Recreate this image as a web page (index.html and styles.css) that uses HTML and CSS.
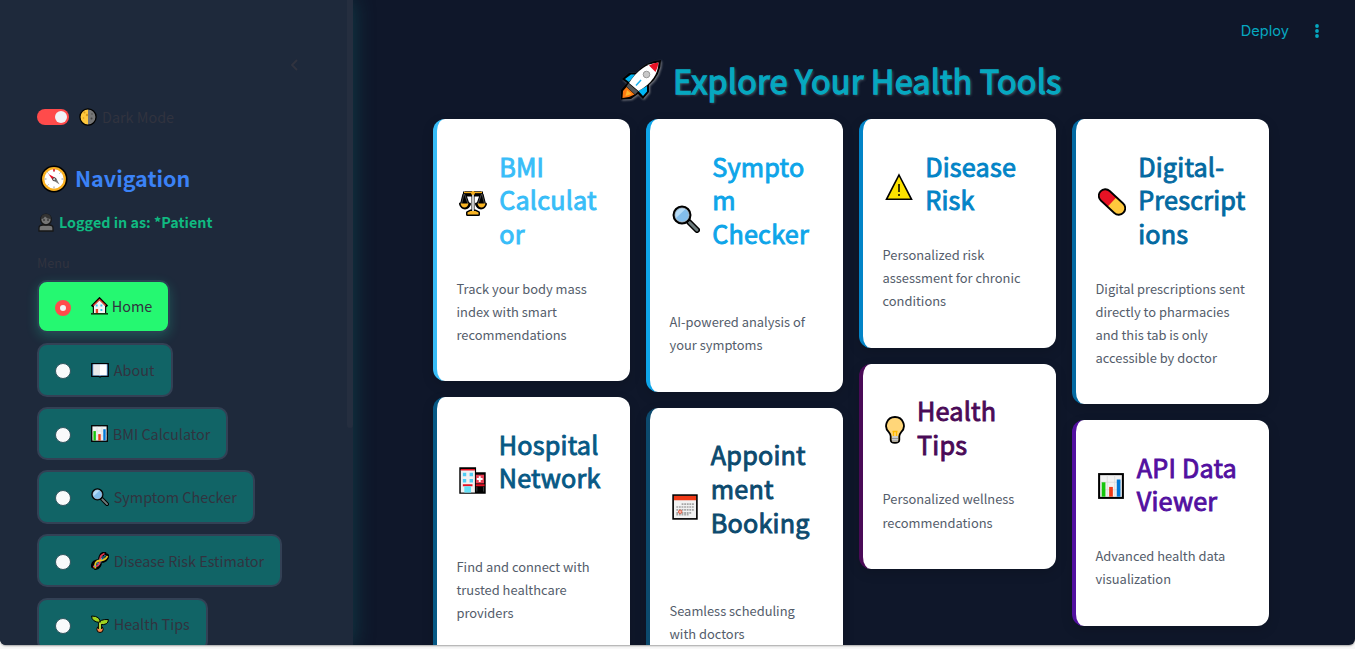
FILE: index.html
```html
<!DOCTYPE html>
<html lang="en">
<head>
<meta charset="utf-8">
<title>Health Tools</title>
<link rel="stylesheet" href="styles.css">
</head>
<body>
<svg class="defs" width="0" height="0">
  <symbol id="lens" viewBox="0 0 28 28">
    <path d="M17 17 25 25" stroke="#000" stroke-width="6" stroke-linecap="round"/>
    <path d="M17.5 17.5 25 25" stroke="#6d7b7c" stroke-width="3" stroke-linecap="round"/>
    <circle cx="10" cy="10" r="8.3" fill="#83beec" stroke="#000" stroke-width="2.4"/>
    <path d="M4 13A7 7 0 0 1 13.5 4Z" fill="#b5dcf8"/>
    <circle cx="10" cy="10" r="7" fill="none" stroke="#b9c4cc" stroke-width=".8"/>
  </symbol>
  <symbol id="chart" viewBox="0 0 28 28">
    <rect x="1.2" y="1.2" width="25.6" height="25.6" fill="#f2f2f2" stroke="#000" stroke-width="2.2"/>
    <path d="M10 2.5v23M18 2.5v23M2.5 10h23M2.5 18h23" stroke="#dcdcdc"/>
    <path d="M4 10h4v15.5H4z" fill="#16c60c"/><path d="M12 15h4v10.5h-4z" fill="#f03a17"/><path d="M20.200 7h4v18.500h-4z" fill="#0078d7"/>
  </symbol>
</svg>
<div class="app">
  <aside class="sidebar">
    <div class="collapse"><svg width="10" height="14" viewBox="0 0 10 14"><path d="M8 2 3 7l5 5" fill="none" stroke="#31333f" stroke-width="1.800"/></svg></div>
    <div class="toggle-row">
      <span class="toggle"></span>
      <svg class="moon" width="18" height="18" viewBox="0 0 18 18"><circle cx="9" cy="9" r="8" fill="#767676"/><path d="M9 1a8 8 0 0 0 0 16z" fill="#ffc83d"/><circle cx="9" cy="9" r="8.100" fill="none" stroke="#000" stroke-width="1.300"/><circle cx="5.500" cy="4.500" r="1" fill="#d99a1c"/><circle cx="8" cy="7" r="1.200" fill="#d99a1c"/><circle cx="4.500" cy="10" r=".8" fill="#d99a1c"/><circle cx="12.500" cy="10.500" r="1" fill="#444"/><circle cx="13" cy="6" r=".7" fill="#444"/></svg>
      <span class="label dark-label">Dark Mode</span>
    </div>
    <h2 class="nav-title">
      <svg width="28" height="28" viewBox="0 0 28 28"><circle cx="14" cy="14" r="13.500" fill="#000"/><circle cx="14" cy="14" r="11.900" fill="#fab020"/><circle cx="14" cy="14" r="9.700" fill="#fff"/><path d="M14 4.500v2M14 21.500v2M4.500 14h2M21.500 14h2M7.500 7.500l1 1M20.500 7.500l-1 1M7.500 20.500l1-1" stroke="#999"/><path d="M14 4v2.500" stroke="#e81224" stroke-width="1.500"/><path d="m8.500 9 7 4-2.500 2.500z" fill="#e81224"/><path d="m19.500 19.500-6-4 2.500-2.500z" fill="#777"/><circle cx="14.200" cy="14.200" r="1.600" fill="#ccc" stroke="#333" stroke-width=".8"/></svg>
      <span>Navigation</span>
    </h2>
    <div class="user">
      <svg width="16" height="19" viewBox="0 0 16 19"><path d="M1 18v-3q0-3 4-3h6q4 0 4 3v3z" fill="#767676" stroke="#171717" stroke-width="1.300"/><circle cx="8" cy="6.500" r="5.300" fill="#767676" stroke="#171717" stroke-width="1.300"/><path d="M3 6Q3 1 8 1t5 5Q9 6 7 3.500 6 6 3 6z" fill="#333"/><circle cx="6" cy="7" r=".7"/><circle cx="10" cy="7" r=".7"/></svg>
      <span>Logged in as: *Patient</span>
    </div>
    <div class="menu-label">Menu</div>
    <nav class="menu">
      <div class="item active w-home"><i class="radio"></i>
        <svg width="17" height="18" viewBox="0 0 18 18" preserveAspectRatio="none"><path d="M2.500 8v8.500h13V8L9 2z" fill="#f4f4f4" stroke="#000" stroke-width="1.200"/><path d="M.8 9.500 9 1.500l8.200 8" fill="none" stroke="#000" stroke-width="2.400"/><path d="M2.500 8.500 9 2.500l6.500 6" fill="none" stroke="#e8452a" stroke-width="1.200"/><path d="M5 7.500h2v2H5zM10 7.500h2v2h-2zM10 12h2v2h-2z" fill="#37c8f0"/><path d="M5 12h2.500v4.500H5z" fill="#e8452a"/><path d="M0 16.800h18" stroke="#123d14" stroke-width="1.600"/></svg>
        <span class="label">Home</span></div>
      <div class="item w-about"><i class="radio"></i>
        <svg width="18" height="18" viewBox="0 0 18 18"><path d="M.7 2.700h16.600v12.600H10.500L9 16l-1.500-.7H.7z" fill="#4b87c4" stroke="#000" stroke-width="1.200"/><path d="M2.200 3.300H9v11H2.200z" fill="#e9e9e9"/><path d="M9 3.300h6.800v11H9z" fill="#fff"/></svg>
        <span class="label">About</span></div>
      <div class="item w-bmi"><i class="radio"></i><svg width="17" height="17"><use href="#chart"/></svg><span class="label">BMI Calculator</span></div>
      <div class="item w-symptom"><i class="radio"></i><svg width="18" height="18"><use href="#lens"/></svg><span class="label">Symptom Checker</span></div>
      <div class="item w-disease"><i class="radio"></i>
        <svg width="18" height="18" viewBox="0 0 18 18" fill="none"><g stroke="#000" stroke-width="4" stroke-linecap="round"><path d="M2 14.500C1.500 11 4.500 9 9 9s7.500-2 7-5.500"/><path d="M4.500 16C8 15.500 9 13 9 9s1-7 4.500-7.500"/></g><path d="M5.500 13.500 12.500 4.500" stroke="#1d4e66" stroke-width="4"/><path d="M2 14.500C6 15 8.500 13 9 9s0-5.500 4.500-7.500" stroke="#e8384a" stroke-width="1.800"/><path d="M4.500 16.500C3 11 5 9 9 8.500s5.500-1 7.500-4.500" stroke="#e4c51c" stroke-width="1.800"/><path d="m6 10.500 2 2M10 6l2 2M13.500 3l1.500 1.500M3 13l2 2" stroke="#4c9ce0"/></svg>
        <span class="label">Disease Risk Estimator</span></div>
      <div class="item w-tips"><i class="radio"></i>
        <svg width="18" height="18" viewBox="0 0 18 18"><circle cx="9" cy="14.300" r="3.200" fill="#f7894a" stroke="#000"/><path d="M9 14V8" stroke="#000" stroke-width="4"/><path d="M9 8.500Q10 1 .6 1 .6 6.800 9 7.500zM8 9q0-5 9.400-4.500Q17.500 10.500 9 9.500z" fill="#9fd31f" stroke="#000" stroke-width="1"/><path d="M9 14V7.500" stroke="#b4d53c" stroke-width="2.200"/></svg>
        <span class="label">Health Tips</span></div>
    </nav>
    <div class="thumb"></div>
  </aside>
  <main class="main">
    <header class="topbar"><span class="deploy">Deploy</span>
      <svg width="6" height="14" viewBox="0 0 6 14" fill="#06a8c0"><circle cx="3" cy="2" r="1.900"/><circle cx="3" cy="7" r="1.900"/><circle cx="3" cy="12" r="1.900"/></svg></header>
    <h1 class="title">
      <svg width="42" height="42" viewBox="0 0 42 42"><path d="M1 40.500V31l6-7-5-4 7-6h7Q26 2 41 1q0 15-12 25v7l-6 7-5-5-7 5z" fill="#000"/><path d="m5 20 6-4.500h4L9 23zM27 27v5.500l-4 4.500-4.500-5z" fill="#00b7f5"/><path d="M9 24Q21 5 38.500 3.500 38 21 18.500 32z" fill="#fff"/><path d="M29 6.500q5-3 9.500-3-.500 5-3 9.500z" fill="#e81224"/><path d="m8.500 24.500 9.500 8-3 3-8.500-8z" fill="#555"/><path d="m6.500 28 8 7.500-5.500 2.500-6.500 1 .5-7z" fill="#ff7b12"/><path d="m7 31 4.500 4-6 2z" fill="#ffb52c"/><circle cx="26.500" cy="15.500" r="3.300" fill="#c8c8c8" stroke="#999"/><path d="M16 26.500 21 21" stroke="#17b1ee" stroke-width="1.500"/></svg>
      <span>Explore Your Health Tools</span>
    </h1>
    <section class="board">
      <div class="col">
        <article class="card c1">
          <div class="head rows3"><svg class="g42" width="28" height="28" viewBox="0 0 28 28"><path d="M14 3v21M4 5h20M5 6 2.500 16M5.500 6 9 16M22.500 6 19 16M23 6l2.500 10M1.500 16h9q-1 4-4.500 4t-4.500-4zM17.500 16h9q-1 4-4.500 4t-4.500-4zM8.500 26.500v-2l3-1.500h5l3 1.500v2z" fill="#000" stroke="#000" stroke-width="3" stroke-linejoin="round"/><path d="M5 5 2 16h8zM23 5l3 11h-8zM6 3.500h16v5H6z" fill="#000"/><path d="M5 4.500h18" stroke="#f4ad1c" stroke-width="1.300"/><path d="M5 6 2.500 16M5.500 6 9 16M22.500 6 19 16M23 6l2.500 10" stroke="#777" stroke-width=".6"/><path d="M14 3v21" stroke="#ddd" stroke-width="1.800"/><circle cx="14" cy="5" r="2" fill="#f4ad1c"/><path d="M1.500 15.500h8q-1 4-4 4t-4-4zM18.500 15.500h8q-1 4-4 4t-4-4zM8.500 26.500v-2l3-1.500h5l3 1.500v2z" fill="#f9b524"/></svg><h3>BMI<br>Calculat<br>or</h3></div>
          <p>Track your body mass<br>index with smart<br>recommendations</p></article>
        <article class="card c5">
          <div class="head rows3"><svg class="g41" width="27" height="27" viewBox="0 0 28 28"><path d="M.3.300H17.700V5.500h10v22.200H.3z" fill="#000"/><path d="M1.800 3h14.700v23.500H1.800z" fill="#f2f2f2"/><path d="M1.800 2h14.700v1.700H1.800zM4 18h10v2H4zM17.500 18h9v2h-9z" fill="#e81224"/><path d="M4 6h3.500v3.500H4zM11 6h3.500v3.500H11zM4 12.500h3.500V16H4zM11 12.500h3.500V16H11z" fill="#4fcdf5"/><path d="M5.500 20h7v6.500h-7z" fill="#65e1f7"/><path d="M17.500 8h8.500v9h-8.500z" fill="#e84055"/><path d="M21.500 9.500v6M18.500 12.500h6" stroke="#fff" stroke-width="2"/><path d="M18.500 20.500v5M25.500 20.500v5" stroke="#444"/></svg><h3>Hospital<br>Network</h3></div>
          <p>Find and connect with<br>trusted healthcare<br>providers</p></article>
      </div>
      <div class="col">
        <article class="card c2">
          <div class="head rows4"><svg class="g42" width="28" height="28"><use href="#lens"/></svg><h3>Sympto<br>m<br>Checker</h3></div>
          <p>AI-powered analysis of<br>your symptoms</p></article>
        <article class="card c6">
          <div class="head rows4"><svg class="g41" width="26" height="26" viewBox="0 0 27 27"><path d="M.3.300h26.400v26.400H.3z" fill="#000"/><path d="M2 2h23v23H2z" fill="#f2f2f2"/><path d="M2 2h23v4.500H2z" fill="#f03a17"/><path d="M10 10.500h13M4.500 13.500H23M4.500 16.500H23M4.500 19.500H20M4.500 21.500h13" stroke="#a5a5a5" stroke-width="1.800" stroke-dasharray="1.900 .8"/><circle cx="8.500" cy="18.500" r="1.800" fill="#f8b5a8" stroke="#df593e"/></svg><h3>Appoint<br>ment<br>Booking</h3></div>
          <p>Seamless scheduling<br>with doctors</p></article>
      </div>
      <div class="col">
        <article class="card c3">
          <div class="head rows2"><svg class="g42 low" width="28" height="28" viewBox="0 0 28 28"><path d="M14 2 26.500 26.300H1.500z" fill="#fce100" stroke="#000" stroke-width="1.600"/><path d="M14 11v8M14 21v2" stroke="#000" stroke-width="1.500"/></svg><h3>Disease<br>Risk</h3></div>
          <p>Personalized risk<br>assessment for chronic<br>conditions</p></article>
        <article class="card c7">
          <div class="head rows2"><svg class="g33" width="20" height="28" viewBox="0 0 20 28"><path d="M10 1a8.800 8.800 0 0 0-6 15.300q1.700 2 1.700 4.200V24q0 2.800 4.300 2.800t4.300-2.800v-3.500q0-2.200 1.700-4.200A8.800 8.800 0 0 0 10 1z" fill="#ffd679" stroke="#000" stroke-width="1.800"/><path d="M7 20h6v5.500H7z" fill="#ccc"/><path d="M7 22.500h6M7 25h6" stroke="#888" stroke-width=".8"/><path d="M7.500 15.500h5M8.500 15.500v4.500M11.500 15.500v4.500" stroke="#ffb900" stroke-width="1.300"/></svg><h3>Health<br>Tips</h3></div>
          <p>Personalized wellness<br>recommendations</p></article>
      </div>
      <div class="col">
        <article class="card c4">
          <div class="head rows3"><svg class="g42" width="28" height="28" viewBox="0 0 28 28"><g transform="rotate(43 14 14)"><rect x="-1.700" y="7.500" width="31.400" height="13" rx="6.500" fill="#ffc83d"/><path d="M14 7.500H4.800a6.500 6.500 0 0 0 0 13H14z" fill="#e81224"/><rect x="-1.700" y="7.500" width="31.400" height="13" rx="6.500" fill="none" stroke="#000" stroke-width="1.800"/></g></svg><h3>Digital-<br>Prescript<br>ions</h3></div>
          <p>Digital prescriptions sent<br>directly to pharmacies<br>and this tab is only<br>accessible by doctor</p></article>
        <article class="card c8">
          <div class="head rows2"><svg class="g41" width="26" height="26"><use href="#chart"/></svg><h3>API Data<br>Viewer</h3></div>
          <p>Advanced health data<br>visualization</p></article>
      </div>
    </section>
  </main>
</div>
</body>
</html>
```
FILE: styles.css
```css
* { box-sizing: border-box; }
html, body { margin: 0; height: 649px; overflow: hidden; }
body { background: #f8f8f8; font-family: "Noto Sans CJK SC", "Open Sans", sans-serif; }
h1, h2, h3, p { margin: 0; }
svg { flex: none; display: block; }
.defs { position: absolute; }
.app { display: flex; width: 1355px; height: 645px; overflow: hidden; border-radius: 0 0 6px 6px; background: #0f172a; box-shadow: 0 1px 2px rgba(0,0,0,.35); }

.sidebar { position: relative; z-index: 1; flex: none; width: 353px; height: 645px; padding: 57.500px 37px 0; background: #1e293b; box-shadow: 0 0 20px rgba(20,120,120,.4); overflow: clip; overflow-clip-margin: 40px; }
.thumb { position: absolute; top: 0; right: 0; width: 6px; height: 428px; background: #252e3f; border-radius: 0 0 3px 3px; }
.collapse { display: flex; justify-content: flex-end; height: 14px; padding-right: 17px; }
.label { color: #31333f; font-size: 14.4px; line-height: 24px; white-space: nowrap; }
.toggle-row { display: flex; align-items: center; height: 24px; margin-top: 33.500px; }
.toggle { display: flex; justify-content: flex-end; width: 32px; height: 16px; padding: 2px; border-radius: 8px; background: #ff4b4b; }
.toggle::after { content: ""; width: 12px; height: 12px; border-radius: 50%; background: #f0f2f6; }
.moon { margin: 0 5px 0 10px; }
.nav-title { display: flex; align-items: center; gap: 8px; height: 34px; margin: 32px 0 0 2px; color: #3b82f6; font-size: 21.500px; line-height: 34px; }
.nav-title svg { position: relative; top: .5px; left: .5px; }
.user { display: flex; align-items: center; gap: 5px; height: 24px; margin: 15px 0 0 1px; color: #10b981; font-size: 14.350px; font-weight: 700; line-height: 24px; }
.menu-label { height: 20px; margin-top: 19px; color: #31333f; font-size: 12.600px; line-height: 20px; }
.menu { display: flex; flex-direction: column; align-items: flex-start; gap: 10.100px; margin-top: 6.600px; }
.item { flex: none; display: flex; align-items: center; height: 53.500px; padding-left: 16px; border: 2px solid #334155; border-radius: 10px; background: #116466; white-space: nowrap; }
.item svg { margin-right: 5px; }
.item.active { background: #25f871; border-color: #2a4152; box-shadow: 0 4px 12px rgba(37,248,190,.2); }
.item.active svg { margin-right: 4px; }
.radio { flex: none; width: 16px; height: 16px; margin: 2.400px 19.800px 0 0; border-radius: 50%; background: #f9fafb; border: 1px solid #31565f; }
.active .radio { border: 5px solid #ff4b4b; background: #f0f2f6; }
.w-home { width: 133px; } .w-about { width: 136px; } .w-bmi { width: 191px; }
.w-symptom { width: 218px; } .w-disease { width: 245px; } .w-tips { width: 171px; }

.main { flex: 1; min-width: 0; padding: 0 0 0 80px; }
.topbar { display: flex; justify-content: flex-end; align-items: center; gap: 25px; height: 61px; padding-right: 35px; }
.deploy { color: #06a8c0; font-family: Inter, sans-serif; font-size: 14.600px; line-height: 24px; }
.title { display: flex; align-items: center; gap: 11px; height: 43px; margin: -3px 0 18.200px 187px; color: #06a8c0; font-size: 32.400px; font-weight: 400; letter-spacing: .2px; line-height: 43px; white-space: nowrap; -webkit-text-stroke: 1.300px #06a8c0; text-shadow: 1px 1px 3px rgba(150,160,170,.6); }
.title svg { -webkit-text-stroke: 0; filter: drop-shadow(1px 1px 1px rgba(190,190,190,.6)); }
.board { display: flex; gap: 16px; align-items: flex-start; }
.col { display: flex; flex-direction: column; gap: 16px; width: 197px; }
.card { padding: 31px 0 35.600px 19.500px; border-left: 4px solid; border-radius: 12px; background: #fff; box-shadow: 0 4px 12px rgba(0,0,0,.15); }
.head { display: flex; align-items: center; }
.head svg { margin-left: 2.500px; position: relative; top: 1.400px; }
.head .low { top: 3px; }
.rows2 { height: 67.200px; } .rows3 { height: 100.800px; } .rows4 { height: 134.400px; }
h3 { align-self: flex-start; margin-top: -.5px; font-size: 25.200px; font-weight: 400; letter-spacing: .2px; line-height: 33.600px; white-space: nowrap; -webkit-text-stroke: .9px currentColor; }
.g42 { margin-right: 12.200px; } .g41 { margin-right: 12.800px; } .g33 { margin-right: 12px; }
.card p { margin-top: 25.600px; color: #545d6b; font-size: 12.900px; line-height: 23.040px; white-space: nowrap; }
.c1 { border-color: #38bdf8; } .c1 h3 { color: #38bdf8; }
.c2 { border-color: #0ea5e9; } .c2 h3 { color: #0ea5e9; }
.c3 { border-color: #0284c7; } .c3 h3 { color: #0284c7; }
.c4 { border-color: #0369a1; } .c4 h3 { color: #0369a1; }
.c5 { border-color: #075985; } .c5 h3 { color: #075985; }
.c6 { border-color: #0c4a6e; } .c6 h3 { color: #0c4a6e; }
.c7 { border-color: #4a0a57; } .c7 h3 { color: #4a0a57; }
.c8 { border-color: #5210a0; } .c8 h3 { color: #5210a0; }
```
